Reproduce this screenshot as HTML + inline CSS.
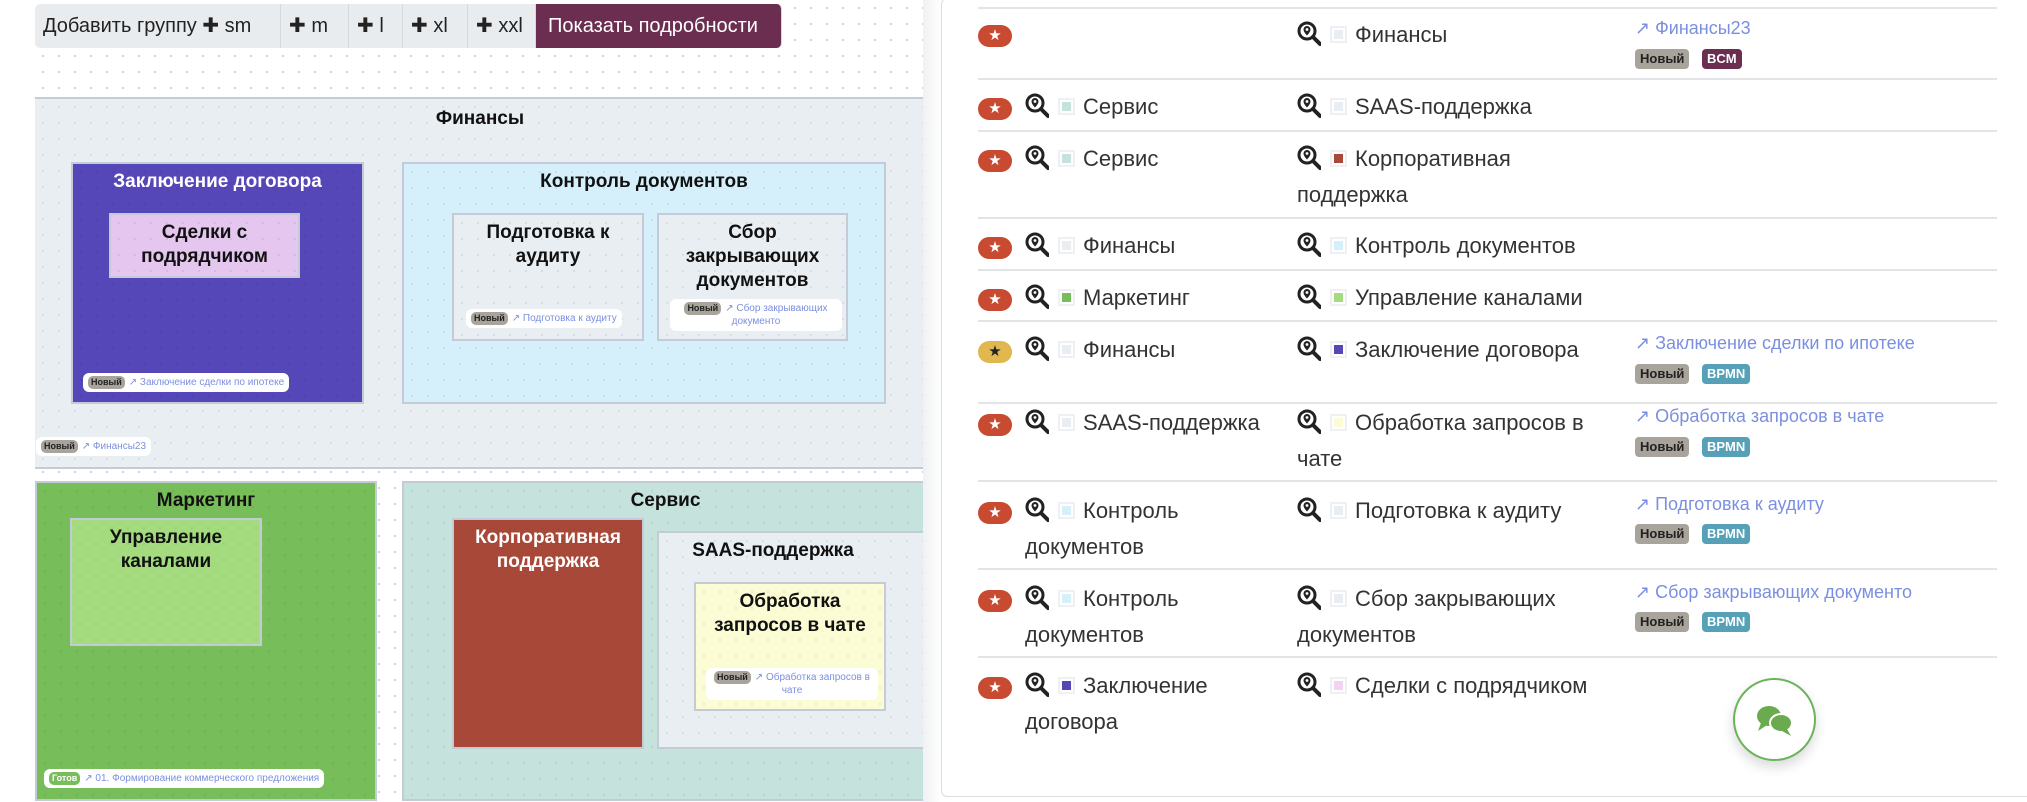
<!DOCTYPE html>
<html><head><meta charset="utf-8"><style>
*{box-sizing:border-box;margin:0;padding:0}
body{width:2027px;height:802px;overflow:hidden;background:#fff;font-family:"Liberation Sans","DejaVu Sans",sans-serif;position:relative}
.left{position:absolute;left:0;top:0;width:923px;height:802px;background:#fff}
.dots{position:absolute;left:35px;top:0;width:888px;height:802px;background-image:radial-gradient(#c9ccd2 1px,transparent 1.2px);background-size:16px 16px}
.a{position:absolute}
.tb{top:4px;height:44px;background:#e9ecef;border-right:1px solid #d6d9dd;font-size:20px;color:#222;line-height:44px;padding:0 8px}
.grp{position:absolute;border:2px solid #c3cbd6;background-image:radial-gradient(rgba(0,0,0,.07) 1px,transparent 1.2px);background-size:16px 16px}
.gt{position:absolute;left:0;right:0;text-align:center;font-weight:bold;font-size:19px;color:#111;line-height:24px}
.tag{position:absolute;background:#fff;border-radius:6px;font-size:10px;color:#7b8fe0;padding:3px 5px;line-height:13px;white-space:nowrap}
.nb{display:inline-block;background:#a8a49c;color:#222;border-radius:5px;padding:0 3px;font-size:9px;font-weight:bold;margin-right:4px}
.card{position:absolute;left:941px;top:-2px;width:1100px;height:799px;border:1px solid #ddd;border-radius:6px;background:#fff}
.ln{position:absolute;left:978px;width:1019px;height:2px;background:#e2e4e6}
.row{position:absolute;font-size:22px;color:#333;line-height:36px}
.star{position:absolute;width:34px;height:22px;border-radius:11px;background:#c84b31;color:#fff;font-size:15px;text-align:center;line-height:22px}
.mg{position:absolute;width:24px;height:26px}
.sq{display:inline-block;width:17px;height:17px;border:2px solid #eef0f3;vertical-align:-1px;margin-right:8px;padding:2px}
.sq i{display:block;width:9px;height:9px}
.lk{position:absolute;font-size:18px;color:#7b8fe0;white-space:nowrap}
.bd{position:absolute;height:20px;border-radius:4px;font-size:13px;font-weight:bold;line-height:20px;padding:0 5px}
</style></head><body>
<div class="left">
 <div class="dots"></div>
 <div class="a tb" style="left:35px;width:246px;border-radius:5px 0 0 5px">Добавить группу <b>✚</b> sm</div>
 <div class="a tb" style="left:281px;width:68px"><b>✚</b> m</div>
 <div class="a tb" style="left:349px;width:54px"><b>✚</b> l</div>
 <div class="a tb" style="left:403px;width:65px"><b>✚</b> xl</div>
 <div class="a tb" style="left:468px;width:68px"><b>✚</b> xxl</div>
 <div class="a tb" style="left:536px;width:246px;background:#6b2e51;color:#fff;border-radius:0 5px 5px 0;padding-left:12px">Показать подробности</div>

 <div class="grp" style="left:35px;top:97px;width:890px;height:372px;background-color:#e9eef2;border-width:2px 0">
  <div class="gt" style="top:8px">Финансы</div>
 </div>
 <div class="grp" style="left:71px;top:162px;width:293px;height:242px;background-color:#5547b7"><div class="gt" style="top:6px;color:#fff">Заключение договора</div></div>
 <div class="grp" style="left:109px;top:213px;width:191px;height:65px;background-color:#e4c6ef"><div class="gt" style="top:6px">Сделки с<br>подрядчиком</div></div>
 <div class="tag" style="left:83px;top:373px"><span class="nb">Новый</span>↗ Заключение сделки по ипотеке</div>
 <div class="grp" style="left:402px;top:162px;width:484px;height:242px;background-color:#d5f0fa"><div class="gt" style="top:6px">Контроль документов</div></div>
 <div class="grp" style="left:452px;top:213px;width:192px;height:128px;background-color:#e9eef2"><div class="gt" style="top:6px">Подготовка к<br>аудиту</div></div>
 <div class="tag" style="left:466px;top:309px"><span class="nb">Новый</span>↗ Подготовка к аудиту</div>
 <div class="grp" style="left:657px;top:213px;width:191px;height:128px;background-color:#e9eef2"><div class="gt" style="top:6px">Сбор<br>закрывающих<br>документов</div></div>
 <div class="tag" style="left:670px;top:299px;width:172px;text-align:center;white-space:normal"><span class="nb">Новый</span>↗ Сбор закрывающих документо</div>
 <div class="tag" style="left:36px;top:437px"><span class="nb">Новый</span>↗ Финансы23</div>

 <div class="grp" style="left:35px;top:481px;width:342px;height:320px;background-color:#77bd5a"><div class="gt" style="top:6px">Маркетинг</div></div>
 <div class="grp" style="left:70px;top:518px;width:192px;height:128px;background-color:#a3db7e"><div class="gt" style="top:6px">Управление<br>каналами</div></div>
 <div class="tag" style="left:44px;top:769px"><span class="nb" style="background:#77bd5a;color:#fff">Готов</span>↗ 01. Формирование коммерческого предложения</div>
 <div class="grp" style="left:402px;top:481px;width:525px;height:320px;background-color:#c5e3dc;border-right:0"><div class="gt" style="top:6px;padding-right:0">Сервис</div></div>
 <div class="grp" style="left:452px;top:518px;width:192px;height:231px;background-color:#a84838"><div class="gt" style="top:6px;color:#fff">Корпоративная<br>поддержка</div></div>
 <div class="grp" style="left:657px;top:531px;width:270px;height:218px;background-color:#e9eef2;border-right:0"><div class="gt" style="top:6px;width:228px">SAAS-поддержка</div></div>
 <div class="grp" style="left:694px;top:582px;width:192px;height:129px;background-color:#fbfbd4"><div class="gt" style="top:6px">Обработка<br>запросов в чате</div></div>
 <div class="tag" style="left:706px;top:668px;width:172px;text-align:center;white-space:normal"><span class="nb">Новый</span>↗ Обработка запросов в чате</div>
</div>
<div class="a" style="left:923px;top:0;width:18px;height:802px;background:linear-gradient(90deg,#f0f1f3,#fff)"></div>

<div class="card"></div>
<div class="ln" style="top:7px"></div><div class="ln" style="top:78px"></div><div class="ln" style="top:130px"></div><div class="ln" style="top:217px"></div><div class="ln" style="top:269px"></div><div class="ln" style="top:320px"></div><div class="ln" style="top:402px"></div><div class="ln" style="top:480px"></div><div class="ln" style="top:568px"></div><div class="ln" style="top:656px"></div>

<svg width="0" height="0" style="position:absolute"><defs><g id="m"><circle cx="10" cy="10" r="8" fill="none" stroke="#222" stroke-width="3"/><path d="M16 16 L23 23" stroke="#222" stroke-width="4" stroke-linecap="round"/><path d="M10 5a3.5 3.5 0 0 1 3.5 3.5c0 2.5-3.5 6-3.5 6s-3.5-3.5-3.5-6A3.5 3.5 0 0 1 10 5z" fill="#222"/><circle cx="10" cy="8.5" r="1.4" fill="#fff"/></g></defs></svg>

<div class="star" style="left:978px;top:25px">★</div>
<svg class="mg" style="left:1297px;top:21px"><use href="#m"/></svg>
<div class="row" style="left:1330px;top:17px"><span class="sq"><i style="background:#e9eef2"></i></span>Финансы</div>
<div class="lk" style="left:1635px;top:18px">↗ Финансы23</div>
<div class="bd" style="left:1635px;top:49px;background:#a8a49c;color:#222">Новый</div><div class="bd" style="left:1702px;top:49px;background:#6b2e51;color:#fff">BCM</div>

<div class="star" style="left:978px;top:98px">★</div>
<svg class="mg" style="left:1025px;top:93px"><use href="#m"/></svg>
<div class="row" style="left:1058px;top:89px"><span class="sq"><i style="background:#c5e3dc"></i></span>Сервис</div>
<svg class="mg" style="left:1297px;top:93px"><use href="#m"/></svg>
<div class="row" style="left:1330px;top:89px"><span class="sq"><i style="background:#e9eef2"></i></span>SAAS-поддержка</div>

<div class="star" style="left:978px;top:150px">★</div>
<svg class="mg" style="left:1025px;top:145px"><use href="#m"/></svg>
<div class="row" style="left:1058px;top:141px"><span class="sq"><i style="background:#c5e3dc"></i></span>Сервис</div>
<svg class="mg" style="left:1297px;top:145px"><use href="#m"/></svg>
<div class="row" style="left:1297px;top:141px;width:270px;text-indent:33px"><span class="sq"><i style="background:#a84838"></i></span>Корпоративная поддержка</div>

<div class="star" style="left:978px;top:237px">★</div>
<svg class="mg" style="left:1025px;top:232px"><use href="#m"/></svg>
<div class="row" style="left:1058px;top:228px"><span class="sq"><i style="background:#e9eef2"></i></span>Финансы</div>
<svg class="mg" style="left:1297px;top:232px"><use href="#m"/></svg>
<div class="row" style="left:1330px;top:228px"><span class="sq"><i style="background:#d5f0fa"></i></span>Контроль документов</div>

<div class="star" style="left:978px;top:289px">★</div>
<svg class="mg" style="left:1025px;top:284px"><use href="#m"/></svg>
<div class="row" style="left:1058px;top:280px"><span class="sq"><i style="background:#77bd5a"></i></span>Маркетинг</div>
<svg class="mg" style="left:1297px;top:284px"><use href="#m"/></svg>
<div class="row" style="left:1330px;top:280px"><span class="sq"><i style="background:#a3db7e"></i></span>Управление каналами</div>

<div class="star" style="left:978px;top:341px;background:#e0b84f;color:#222">★</div>
<svg class="mg" style="left:1025px;top:336px"><use href="#m"/></svg>
<div class="row" style="left:1058px;top:332px"><span class="sq"><i style="background:#e9eef2"></i></span>Финансы</div>
<svg class="mg" style="left:1297px;top:336px"><use href="#m"/></svg>
<div class="row" style="left:1330px;top:332px"><span class="sq"><i style="background:#5547b7"></i></span>Заключение договора</div>
<div class="lk" style="left:1635px;top:333px">↗ Заключение сделки по ипотеке</div>
<div class="bd" style="left:1635px;top:364px;background:#a8a49c;color:#222">Новый</div><div class="bd" style="left:1702px;top:364px;background:#56a1b8;color:#fff">BPMN</div>

<div class="star" style="left:978px;top:414px">★</div>
<svg class="mg" style="left:1025px;top:409px"><use href="#m"/></svg>
<div class="row" style="left:1058px;top:405px"><span class="sq"><i style="background:#e9eef2"></i></span>SAAS-поддержка</div>
<svg class="mg" style="left:1297px;top:409px"><use href="#m"/></svg>
<div class="row" style="left:1297px;top:405px;width:320px;text-indent:33px"><span class="sq"><i style="background:#fbfbd4"></i></span>Обработка запросов в чате</div>
<div class="lk" style="left:1635px;top:406px">↗ Обработка запросов в чате</div>
<div class="bd" style="left:1635px;top:437px;background:#a8a49c;color:#222">Новый</div><div class="bd" style="left:1702px;top:437px;background:#56a1b8;color:#fff">BPMN</div>

<div class="star" style="left:978px;top:502px">★</div>
<svg class="mg" style="left:1025px;top:497px"><use href="#m"/></svg>
<div class="row" style="left:1025px;top:493px;width:240px;text-indent:33px"><span class="sq"><i style="background:#d5f0fa"></i></span>Контроль документов</div>
<svg class="mg" style="left:1297px;top:497px"><use href="#m"/></svg>
<div class="row" style="left:1330px;top:493px"><span class="sq"><i style="background:#e9eef2"></i></span>Подготовка к аудиту</div>
<div class="lk" style="left:1635px;top:494px">↗ Подготовка к аудиту</div>
<div class="bd" style="left:1635px;top:524px;background:#a8a49c;color:#222">Новый</div><div class="bd" style="left:1702px;top:524px;background:#56a1b8;color:#fff">BPMN</div>

<div class="star" style="left:978px;top:590px">★</div>
<svg class="mg" style="left:1025px;top:585px"><use href="#m"/></svg>
<div class="row" style="left:1025px;top:581px;width:240px;text-indent:33px"><span class="sq"><i style="background:#d5f0fa"></i></span>Контроль документов</div>
<svg class="mg" style="left:1297px;top:585px"><use href="#m"/></svg>
<div class="row" style="left:1297px;top:581px;width:300px;text-indent:33px"><span class="sq"><i style="background:#e9eef2"></i></span>Сбор закрывающих документов</div>
<div class="lk" style="left:1635px;top:582px">↗ Сбор закрывающих документо</div>
<div class="bd" style="left:1635px;top:612px;background:#a8a49c;color:#222">Новый</div><div class="bd" style="left:1702px;top:612px;background:#56a1b8;color:#fff">BPMN</div>

<div class="star" style="left:978px;top:677px">★</div>
<svg class="mg" style="left:1025px;top:672px"><use href="#m"/></svg>
<div class="row" style="left:1025px;top:668px;width:240px;text-indent:33px"><span class="sq"><i style="background:#5547b7"></i></span>Заключение договора</div>
<svg class="mg" style="left:1297px;top:672px"><use href="#m"/></svg>
<div class="row" style="left:1330px;top:668px"><span class="sq"><i style="background:#f3d3f3"></i></span>Сделки с подрядчиком</div>

<div class="a" style="left:1733px;top:678px;width:83px;height:83px;border-radius:50%;border:2px solid #6db35a;background:#fff;box-shadow:0 6px 12px rgba(0,0,0,.15)">
 <svg width="40" height="34" style="position:absolute;left:20px;top:23px" viewBox="0 0 40 34"><ellipse cx="14" cy="13" rx="12" ry="10" fill="#6aab4f"/><path d="M6 20 L3 28 L12 22Z" fill="#6aab4f"/><ellipse cx="26" cy="20" rx="11" ry="9" fill="#6aab4f" stroke="#fff" stroke-width="2"/><path d="M32 26 L36 33 L27 28Z" fill="#6aab4f"/></svg>
</div>
</body></html>
